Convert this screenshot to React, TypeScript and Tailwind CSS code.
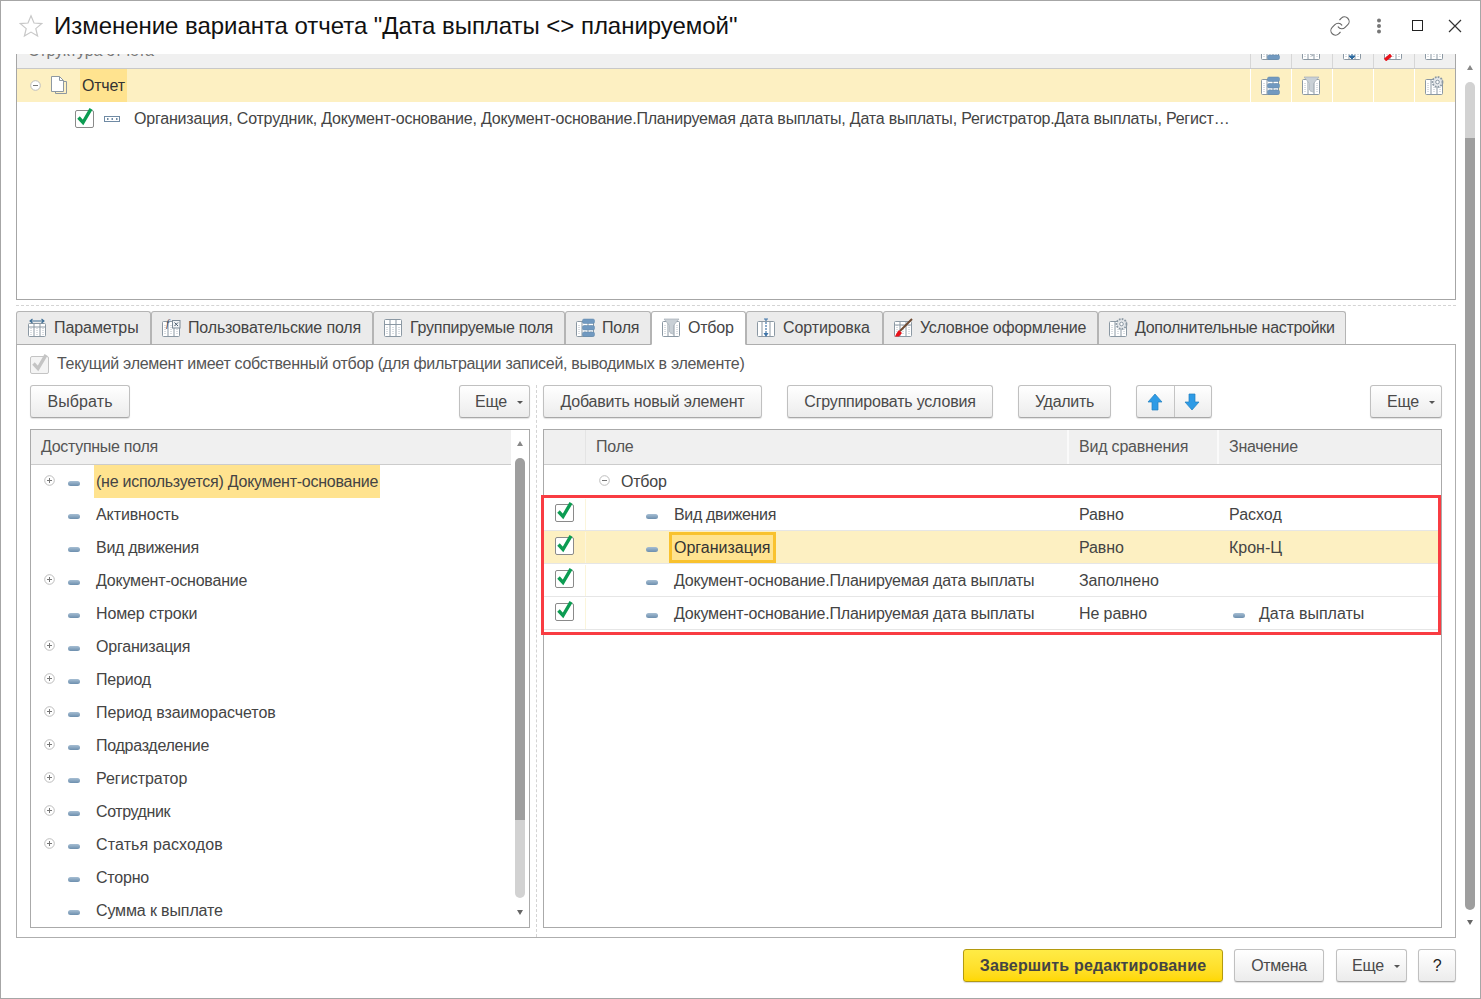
import React from "react";
import { Link } from "lucide-react";

const Base = ({ children, hdr = false }: { children?: React.ReactNode; hdr?: boolean }) => (
  <>
    <rect x="1.5" y="3.5" width="17" height="15" rx="1" fill="#fff" stroke="#8b98a3" />
    <path d="M7 4v14M13 4v14" stroke="#8b98a3" />
    <path d="M4 7v10M10 7v10M16 7v10" stroke="#b4bcc4" strokeDasharray="1 1" />
    {hdr && <path d="M2 7h16" stroke="#8b98a3" />}
    {children}
  </>
);

const Svg = ({ children }: { children: React.ReactNode }) => (
  <svg width="20" height="20" viewBox="0 0 20 20" className="shrink-0 block">{children}</svg>
);

const Bars = () => (
  <>
    <rect x="7.500" y="1" width="12" height="4.500" rx="1.500" fill="#7199c0" stroke="#5f86ab" strokeWidth="0.5" />
    <rect x="7.500" y="7.500" width="12" height="4.500" rx="1.500" fill="#7199c0" stroke="#5f86ab" strokeWidth="0.5" />
    <rect x="7.500" y="14" width="12" height="4.500" rx="1.500" fill="#7199c0" stroke="#5f86ab" strokeWidth="0.5" />
  </>
);
const Funnel = () => <path d="M3 1h15l-5.500 6.500v9l-4-2.500V7.500z" fill="#c9d0d6" stroke="#a7b0b8" strokeWidth="0.7" />;
const Gear = () => (
  <>
    <circle cx="13.500" cy="6" r="5" fill="#e4e7ea" stroke="#8b98a3" strokeWidth="1.800" strokeDasharray="1.700 1.200" />
    <circle cx="13.500" cy="6" r="1.800" fill="#fff" stroke="#8b98a3" />
  </>
);

const TabIcon = ({ kind }: { kind: string }) => {
  if (kind === "params")
    return (
      <Svg>
        <rect x="1.500" y="5.500" width="17" height="13" rx="1" fill="#fff" stroke="#8b98a3" />
        <path d="M7 6v12M13 6v12M2 9h16" stroke="#8b98a3" />
        <path d="M4 10v7M10 10v7M16 10v7" stroke="#b4bcc4" strokeDasharray="1 1" />
        <path d="M3 3h14M5.500 1L3 3l2.500 2M14.500 1L17 3l-2.500 2" fill="none" stroke="#3f6f96" strokeWidth="1.100" />
      </Svg>
    );
  if (kind === "user")
    return (
      <Svg>
        <Base />
        <rect x="11.500" y="2.500" width="7.500" height="7.500" fill="#f2f4f6" stroke="#7d8a96" />
        <path d="M13.500 4.500l3.500 3.500M17 4.500l-3.500 3.500" stroke="#4a5c6c" />
        <text x="5" y="9" fontSize="11" fontFamily="Liberation Serif" fontStyle="italic" fill="#445">f</text>
      </Svg>
    );
  if (kind === "group")
    return (
      <Svg>
        <rect x="1.500" y="1.500" width="17" height="17" rx="1" fill="#fff" stroke="#8b98a3" />
        <path d="M2 6.500h16M7 2v16M13 2v16" stroke="#8b98a3" />
        <path d="M4 9v8M10 9v8M16 9v8" stroke="#b4bcc4" strokeDasharray="1 1" />
      </Svg>
    );
  if (kind === "fields")
    return (
      <Svg>
        <Base />
        <Bars />
      </Svg>
    );
  if (kind === "filter")
    return (
      <Svg>
        <Base />
        <Funnel />
      </Svg>
    );
  if (kind === "sort")
    return (
      <Svg>
        <rect x="1.500" y="3.500" width="17" height="15" rx="1" fill="#fff" stroke="#8b98a3" />
        <path d="M6 4v14M14 4v14" stroke="#8b98a3" />
        <path d="M10 1v15" stroke="#3f74a8" strokeDasharray="2 1" strokeWidth="1.200" />
        <path d="M7.500 15h5L10 19z" fill="#3f74a8" />
        <path d="M8 1h4" stroke="#3f74a8" />
      </Svg>
    );
  if (kind === "cond")
    return (
      <Svg>
        <Base hdr />
        <path d="M19 1L7 13" stroke="#6e4a32" strokeWidth="2" />
        <path d="M6 12l3 3-3 3.500H1.500c1.500-1 2-4 4.500-6.500z" fill="#e8121a" />
      </Svg>
    );
  return (
    <Svg>
      <Base />
      <Gear />
    </Svg>
  );
};

const Check = ({ disabled = false }: { disabled?: boolean }) => (
  <svg width="20" height="22" viewBox="0 0 20 22" className="shrink-0 block">
    <rect x="0.500" y="3.500" width="18" height="17" rx="1.500" fill={disabled ? "#f4f4f4" : "#fff"} stroke={disabled ? "#c4c4c4" : "#8a8a8a"} />
    <path
      d="M3.500 10.500l4.500 5L16 1.800"
      fill="none"
      stroke={disabled ? "#c4c4c4" : "#0c9c52"}
      strokeWidth="3.400"
    />
  </svg>
);

const Dash = () => (
  <span className="block w-[12px] h-[5px] rounded-[2.5px] bg-gradient-to-b from-[#a6bed3] to-[#6d8fae] shrink-0" />
);

const Circle = ({ plus = false }: { plus?: boolean }) => (
  <svg width="11" height="11" viewBox="0 0 11 11" className="shrink-0 block">
    <circle cx="5.500" cy="5.500" r="4.800" fill="#fff" stroke="#bdbdbd" />
    <path d={plus ? "M3 5.500h5M5.500 3v5" : "M3 5.500h5"} stroke="#777" />
  </svg>
);

const Btn = ({
  children,
  className = "",
}: {
  children: React.ReactNode;
  className?: string;
}) => (
  <div
    className={
      "h-[33px] flex items-center rounded-[3px] border border-[#c0c0c0] border-b-[#a8a8a8] bg-gradient-to-b from-white to-[#ececec] text-[#4a4a4a] shadow-[0_1px_1px_rgba(0,0,0,0.12)] shrink-0 " +
      className
    }
  >
    {children}
  </div>
);

const Caret = () => (
  <span className="ml-[10px] mt-[2px] w-0 h-0 border-l-[3px] border-r-[3px] border-t-[3px] border-l-transparent border-r-transparent border-t-[#555]" />
);

const ScrollBar = ({
  lightFirst,
  dark,
  light,
  className,
  arrowTop,
  topGap,
  botGap,
}: {
  lightFirst: boolean;
  dark: number;
  light: number;
  className: string;
  arrowTop: string;
  topGap: string;
  botGap: string;
}) => (
  <div className={"flex flex-col items-center " + className}>
    <span className={"w-0 h-0 border-l-[3px] border-r-[3px] border-b-[5px] border-l-transparent border-r-transparent border-b-[#888] shrink-0 " + arrowTop} />
    <div className={"flex flex-col w-[10px] rounded-[5px] overflow-hidden " + topGap}>
      {lightFirst && <div className="bg-[#d2d2d2]" style={{ height: light }} />}
      <div className="bg-[#9e9e9e]" style={{ height: dark }} />
      {!lightFirst && <div className="bg-[#d2d2d2]" style={{ height: light }} />}
    </div>
    <span className={"w-0 h-0 border-l-[3px] border-r-[3px] border-t-[5px] border-l-transparent border-r-transparent border-t-[#666] shrink-0 " + botGap} />
  </div>
);

const tabs = [
  ["params", "Параметры", 135, "tracking-[-0.08px]"],
  ["user", "Пользовательские поля", 222, "tracking-[-0.16px]"],
  ["group", "Группируемые поля", 192, "tracking-[-0.25px]"],
  ["fields", "Поля", 86, "tracking-[-0.2px]"],
  ["filter", "Отбор", 95, "tracking-[-0.2px]"],
  ["sort", "Сортировка", 137, "tracking-[-0.1px]"],
  ["cond", "Условное оформление", 215, "tracking-[-0.25px]"],
  ["extra", "Дополнительные настройки", 248, "tracking-[-0.3px]"],
] as const;

const avail: [string, boolean, string][] = [
  ["(не используется) Документ-основание", true, "bg-[#ffe38f] tracking-[-0.25px]"],
  ["Активность", false, "tracking-[-0.1px]"],
  ["Вид движения", false, "tracking-[-0.28px]"],
  ["Документ-основание", true, ""],
  ["Номер строки", false, "tracking-[-0.12px]"],
  ["Организация", true, ""],
  ["Период", true, ""],
  ["Период взаиморасчетов", true, "tracking-[-0.05px]"],
  ["Подразделение", true, "tracking-[-0.27px]"],
  ["Регистратор", true, "tracking-[0px]"],
  ["Сотрудник", true, "tracking-[-0.4px]"],
  ["Статья расходов", true, "tracking-[0.13px]"],
  ["Сторно", false, ""],
  ["Сумма к выплате", false, "tracking-[-0.13px]"],
];

const rows = [
  ["Вид движения", "Равно", "Расход", false],
  ["Организация", "Равно", "Крон-Ц", false],
  ["Документ-основание.Планируемая дата выплаты", "Заполнено", "", false],
  ["Документ-основание.Планируемая дата выплаты", "Не равно", "Дата выплаты", true],
] as const;

const StructCell = ({ children, head = false }: { children?: React.ReactNode; head?: boolean }) => (
  <div className={"w-[41px] shrink-0 flex justify-center pr-[2px] border-l " + (head ? "border-[#d6d6d6] items-end" : "border-white items-center")}>
    {children}
  </div>
);

export default function App() {
  return (
    <div className="relative w-[1481px] h-[999px] overflow-hidden flex flex-col bg-white border border-[#a6a6a6] text-[16px] tracking-[-0.2px] text-[#444] [font-family:'Liberation_Sans',Arial,sans-serif]">
      {/* Title */}
      <div className="h-[53px] shrink-0 flex items-center pl-[18px] pr-[18px] pb-[4px]">
        <svg width="24" height="24" viewBox="0 0 24 24" className="shrink-0 mt-[1px]">
          <path d="M12 1.800l3 7.200 7.600.6-5.800 5 1.800 7.500L12 18.100l-6.600 4 1.800-7.500-5.800-5L9 9z" fill="#fff" stroke="#c8c8c8" strokeWidth="1.200" />
        </svg>
        <div className="ml-[11px] text-[24px] tracking-[-0.04px] text-[#111] whitespace-nowrap">Изменение варианта отчета "Дата выплаты &lt;&gt; планируемой"</div>
        <div className="ml-auto flex items-center">
          <Link size={22} strokeWidth={1.200} className="text-[#666]" />
          <svg width="6" height="16" viewBox="0 0 6 16" className="ml-[25px]">
            <circle cx="3" cy="2.500" r="2" fill="#777" />
            <circle cx="3" cy="8" r="2" fill="#777" />
            <circle cx="3" cy="13.500" r="2" fill="#777" />
          </svg>
          <div className="ml-[30px] w-[11px] h-[11px] border-[1.5px] border-[#222]" />
          <svg width="14" height="14" viewBox="0 0 14 14" className="ml-[25px]">
            <path d="M1 1l12 12M13 1L1 13" stroke="#333" strokeWidth="1.200" />
          </svg>
        </div>
      </div>

      {/* Main */}
      <div className="h-[884px] shrink-0 flex pl-[15px]">
        <div className="w-[1440px] flex flex-col shrink-0">
          {/* Structure table */}
          <div className="h-[246px] shrink-0 border-x border-b border-[#a6a6a6] flex flex-col overflow-hidden">
            <div className="h-[15px] shrink-0 flex bg-[#f0f0f0] border-b border-[#c8c8c8] overflow-hidden">
              <div className="flex-1 pl-[11px] -mt-[13px] text-[#777] whitespace-nowrap leading-[20px]">Структура отчета</div>
              <StructCell head>
                <div className="mb-[7px] shrink-0"><Svg><Base /><Bars /></Svg></div>
              </StructCell>
              <StructCell head>
                <div className="mb-[7px] shrink-0"><Svg><Base /><path d="M9 9h3v6l-3-2z" fill="#c9d0d6" stroke="#a7b0b8" /></Svg></div>
              </StructCell>
              <StructCell head>
                <div className="mb-[7px] shrink-0"><Svg><Base /><path d="M10 12v4M7 15h6l-3 3z" fill="#2c6aa0" stroke="#2c6aa0" /></Svg></div>
              </StructCell>
              <StructCell head>
                <div className="mb-[7px] shrink-0"><Svg><Base /><path d="M2 19l6-5" stroke="#e8121a" strokeWidth="3.500" /></Svg></div>
              </StructCell>
              <StructCell head>
                <div className="mb-[7px] shrink-0"><Svg><Base /></Svg></div>
              </StructCell>
            </div>
            <div className="h-[33px] shrink-0 flex bg-[#fdf0c2]">
              <div className="w-[63px] shrink-0 flex items-center pl-[13px]">
                <Circle />
                <svg width="18" height="19" viewBox="0 0 18 19" className="ml-[9px] shrink-0">
                  <path d="M1.500.5h8l4 4v11h-12z" fill="#fff" stroke="#8d98a2" />
                  <path d="M9.500.5v4h4M13.500 5.500h3v12h-11v-2" fill="none" stroke="#8d98a2" />
                </svg>
              </div>
              <div className="h-full bg-[#ffe38f] px-[2px] flex items-center text-[#333]">Отчет</div>
              <div className="flex-1" />
              <StructCell><Svg><Base /><Bars /></Svg></StructCell>
              <StructCell><Svg><Base /><Funnel /></Svg></StructCell>
              <StructCell />
              <StructCell />
              <StructCell><Svg><Base /><Gear /></Svg></StructCell>
            </div>
            <div className="h-[33px] shrink-0 flex items-center pl-[58px]">
              <div className="-mt-[2px]"><Check /></div>
              <svg width="16" height="6" viewBox="0 0 16 6" className="ml-[9px] shrink-0">
                <rect x="0.500" y="0.500" width="15" height="5" fill="#fff" stroke="#6f8aa4" />
                <path d="M3 3h1.500M7.500 3h1.500M12 3h1.500" stroke="#6f8aa4" strokeWidth="2" />
              </svg>
              <div className="ml-[14px] whitespace-nowrap text-[#444]">
                Организация, Сотрудник, Документ-основание, Документ-основание.Планируемая дата выплаты, Дата выплаты, Регистратор.Дата выплаты, Регист…
              </div>
            </div>
          </div>

          {/* Splitter */}
          <div className="h-[11px] shrink-0 flex items-center">
            <div className="w-full border-t border-dashed border-[#d4d4d4]" />
          </div>

          {/* Tabs */}
          <div className="h-[33px] shrink-0 flex relative z-10">
            {tabs.map(([k, label, w, track]) => (
              <div
                key={k}
                style={{ width: w }}
                className={
                  "shrink-0 flex items-center rounded-t-[3px] border border-[#b4b4b4] " +
                  (k === "params" ? "pl-[10px] " : "pl-[9px] ") +
                  (k === "filter" ? "bg-white border-b-white h-[34px]" : "bg-[#ebebeb] h-[33px] border-b-0")
                }
              >
                <TabIcon kind={k} />
                <span className={"ml-[7px] whitespace-nowrap text-[#444] " + track}>{label}</span>
              </div>
            ))}
          </div>

          {/* Panel */}
          <div className="flex-1 min-h-0 border border-[#aeaeae] flex flex-col pl-[13px] pr-[13px]">
            <div className="h-[40px] shrink-0 flex items-center pb-[2px]">
              <div className="mt-[-1px]"><Check disabled /></div>
              <span className="ml-[7px] text-[#555] whitespace-nowrap tracking-[-0.29px]">Текущий элемент имеет собственный отбор (для фильтрации записей, выводимых в элементе)</span>
            </div>
            <div className="flex-1 min-h-0 flex">
              {/* Left */}
              <div className="w-[500px] shrink-0 flex flex-col">
                <div className="flex justify-between">
                  <Btn className="w-[100px] justify-center tracking-[0.1px]">Выбрать</Btn>
                  <Btn className="w-[71px] pl-[15px]">Еще<Caret /></Btn>
                </div>
                <div className="relative mt-[11px] h-[499px] shrink-0 border border-[#aaa] overflow-hidden">
                  <div className="h-[35px] bg-[#f0f0f0] border-b border-[#ccc] flex items-center pl-[10px] text-[#555] tracking-[-0.3px]">Доступные поля</div>
                  <div className="flex flex-col">
                    {avail.map(([t, plus, cls], i) => (
                      <div key={t + i} className="h-[33px] shrink-0 flex items-center">
                        <div className="w-[37px] flex shrink-0 -mt-[3px] pl-[13px]">
                          {plus && <Circle plus />}
                        </div>
                        <div className="w-[26px] flex shrink-0 mt-[3px]"><Dash /></div>
                        <div className={"h-full flex items-center px-[2px] whitespace-nowrap text-[#444] " + cls}>{t}</div>
                      </div>
                    ))}
                  </div>
                  <ScrollBar
                    lightFirst={false}
                    dark={362}
                    light={78}
                    arrowTop="mt-[11px]"
                    topGap="mt-[12px]"
                    botGap="mt-[12px]"
                    className="absolute right-0 top-0 w-[18px] h-full bg-white"
                  />
                </div>
              </div>

              {/* Vertical splitter */}
              <div className="w-[13px] shrink-0 flex justify-center">
                <div className="h-full border-l border-dashed border-[#d4d4d4]" />
              </div>

              {/* Right */}
              <div className="w-[899px] shrink-0 flex flex-col">
                <div className="flex">
                  <Btn className="w-[219px] justify-center">Добавить новый элемент</Btn>
                  <Btn className="w-[206px] ml-[25px] justify-center">Сгруппировать условия</Btn>
                  <Btn className="w-[93px] ml-[25px] justify-center tracking-[-0.3px]">Удалить</Btn>
                  <div className="ml-[25px] w-[76px] h-[33px] flex rounded-[3px] border border-[#c0c0c0] border-b-[#a8a8a8] bg-gradient-to-b from-white to-[#ececec] shadow-[0_1px_1px_rgba(0,0,0,0.12)] shrink-0">
                    <div className="w-[38px] flex items-center justify-center border-r border-[#c4c4c4] pr-[2px]">
                      <svg width="16" height="18" viewBox="0 0 16 18"><path d="M8 1l7 8h-4v8H5V9H1z" fill="#2e9be6" stroke="#1f7fbf" strokeWidth="0.7" /></svg>
                    </div>
                    <div className="flex-1 flex items-center justify-center pr-[2px]">
                      <svg width="16" height="18" viewBox="0 0 16 18"><path d="M8 17L1 9h4V1h6v8h4z" fill="#2e9be6" stroke="#1f7fbf" strokeWidth="0.7" /></svg>
                    </div>
                  </div>
                  <Btn className="w-[72px] ml-auto pl-[16px]">Еще<Caret /></Btn>
                </div>
                <div className="relative mt-[11px] h-[499px] shrink-0 border border-[#aaa]">
                  <div className="h-[35px] bg-[#f0f0f0] border-b border-[#ccc] flex text-[#555]">
                    <div className="w-[42px] shrink-0 border-r border-[#e4e4e4]" />
                    <div className="w-[483px] shrink-0 pl-[10px] flex items-center border-r-2 border-[#fafafa]">Поле</div>
                    <div className="w-[150px] shrink-0 pl-[10px] flex items-center border-r-2 border-[#fafafa]">Вид сравнения</div>
                    <div className="flex-1 pl-[10px] flex items-center tracking-[-0.27px]">Значение</div>
                  </div>
                  <div className="h-[33px] flex items-center pl-[55px]">
                    <div className="-mt-[3px]"><Circle /></div>
                    <span className="ml-[11px]">Отбор</span>
                  </div>
                  {rows.map(([f, cmp, val, dash], i) => (
                    <div key={i} className={"h-[33px] flex pt-[1px] border-b border-[#e6e6e6] " + (i === 1 ? "bg-[#fdf0c2]" : "")}>
                      <div className="w-[42px] shrink-0 flex items-center pl-[11px] border-r border-[#fbf5dc]">
                        <div className="-mt-[5px]"><Check /></div>
                      </div>
                      <div className="w-[483px] shrink-0 flex items-center pl-[60px]">
                        <div className="mt-[3px]"><Dash /></div>
                        {i === 1 ? (
                          <div className="ml-[11px] h-[31px] flex items-center px-[2px] border-[3px] border-[#f9c22e] bg-[#ffe38f] text-[#333] tracking-[0px]">{f}</div>
                        ) : (
                          <div className={"ml-[16px] whitespace-nowrap " + (i === 0 ? "tracking-[-0.35px]" : "")}>{f}</div>
                        )}
                      </div>
                      <div className="w-[150px] shrink-0 flex items-center pl-[10px] tracking-[-0.1px]">{cmp}</div>
                      <div className="flex-1 flex items-center pl-[10px] tracking-[0px]">
                        {dash && <div className="mr-[14px] ml-[4px] mt-[3px]"><Dash /></div>}
                        {val}
                      </div>
                    </div>
                  ))}
                  <div className="absolute left-[-3px] top-[65px] w-[900px] h-[140px] border-[3px] border-[#f93c42]" />
                </div>
              </div>
            </div>
          </div>
        </div>
        <ScrollBar
          lightFirst
          dark={772}
          light={56}
          arrowTop="mt-[11px]"
          topGap="mt-[12px]"
          botGap="mt-[10px]"
          className="w-[24px] pl-[4px] shrink-0"
        />
      </div>

      {/* Footer */}
      <div className="flex-1 flex pt-[11px] pl-[962px]">
        <div className="h-[33px] w-[260px] flex items-center justify-center rounded-[3px] border border-[#b39a10] bg-gradient-to-b from-[#ffeb45] to-[#ffd800] font-bold text-[#444] tracking-[0.17px] shadow-[0_1px_1px_rgba(0,0,0,0.15)] shrink-0">Завершить редактирование</div>
        <Btn className="w-[90px] ml-[11px] justify-center tracking-[-0.3px]">Отмена</Btn>
        <Btn className="w-[71px] ml-[12px] pl-[15px]">Еще<Caret /></Btn>
        <Btn className="w-[38px] ml-[11px] justify-center text-[#222]">?</Btn>
      </div>
    </div>
  );
}
